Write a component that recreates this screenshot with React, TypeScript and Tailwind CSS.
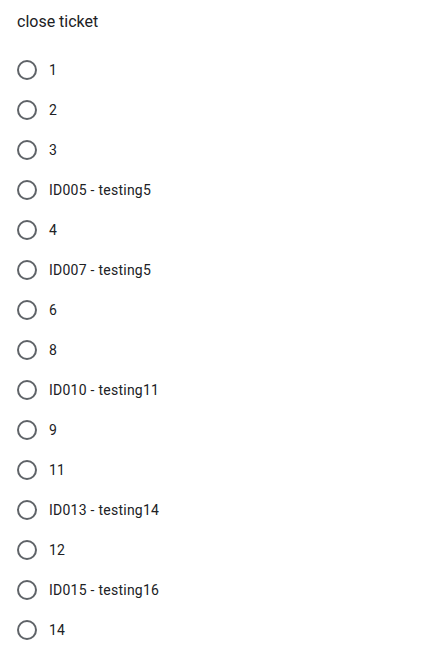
import React from "react";

const items = ["1","2","3","ID005 - testing5","4","ID007 - testing5","6","8","ID010 - testing11","9","11","ID013 - testing14","12","ID015 - testing16","14"];

export default function App() {
  return (
    <div className="w-[424px] h-[660px] bg-white pl-[17px] pt-[10px] font-['Roboto',sans-serif]">
      <div className="text-[16px] leading-[24px] text-[#202124]">close ticket</div>
      <div className="mt-[16px] flex flex-col">
        {items.map((t, i) => (
          <div key={i} className="h-[40px] flex items-center">
            <div className="w-[20px] h-[20px] rounded-full border-2 border-[#5f6368] shrink-0" />
            <span className="ml-[12px] text-[14px] tracking-[0.25px] text-[#202124]">{t}</span>
          </div>
        ))}
      </div>
    </div>
  );
}
